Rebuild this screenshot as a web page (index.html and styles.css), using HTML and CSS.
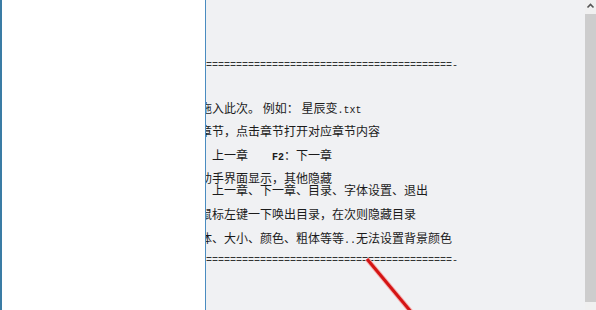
FILE: index.html
```html
<!DOCTYPE html>
<html lang="zh-CN">
<head>
    <meta charset="UTF-8">
    <title>小说阅读器</title>
    <link rel="stylesheet" href="styles.css">
</head>
<body>
<div class="window">
    <!-- 左侧目录 -->
    <aside class="tree"></aside>
    <!-- 正文 -->
    <main class="reader">
        <div class="text">
            <p class="rule">=========================================-</p>
            <p class="blank"></p>
            <p>拖入此次。 例如： 星辰变<span class="en">.txt</span></p>
            <p>章节，点击章节打开对应章节内容</p>
            <p class="pre">　上一章<span class="en">    </span><span class="en b">F2</span>：下一章</p>
            <p class="tight">助手界面显示，其他隐藏</p>
            <p><span class="jp">：</span>上一章、下一章、目录、字体设置、退出</p>
            <p>鼠标左键一下唤出目录，在次则隐藏目录</p>
            <p>体、大小、颜色、粗体等等<span class="en">..</span>无法设置背景颜色</p>
            <p class="rule">=========================================-</p>
        </div>
    </main>
    <!-- 滚动条 -->
    <div class="scrollbar">
        <div class="arrow">
            <svg width="11" height="14" viewBox="0 0 11 14"><polyline points="2.5,7.5 5.5,4.5 8.5,7.5" fill="none" stroke="#555" stroke-width="1.6"/></svg>
        </div>
        <div class="thumb"></div>
        <div class="track"></div>
    </div>
    <!-- 标注 -->
    <svg class="mark" width="596" height="310" viewBox="0 0 596 310">
        <line x1="367" y1="259" x2="412" y2="313" stroke="#f4b0b0" stroke-width="5"/>
        <line x1="367" y1="259" x2="412" y2="313" stroke="#d41414" stroke-width="3"/>
    </svg>
</div>
</body>
</html>
```

FILE: styles.css
```css
*{
    margin: 0;
    padding: 0;
    box-sizing: border-box;
}
html,body{
    width: 100%;
    height: 100%;
    overflow: hidden;
}
body{
    font-family: "Noto Sans CJK SC", "Liberation Sans", sans-serif;
    font-size: 12px;
    color: #1b1b1b;
}
.window{
    position: relative;
    display: flex;
    width: 596px;
    height: 310px;
    background-color: #f0f1f3;
}
.tree{
    width: 206px;
    flex-shrink: 0;
    background-color: #fff;
    border-left: 2px solid #3a7ca5;
    border-right: 1px solid #4a8cc0;
}
.reader{
    flex: 1;
    overflow: hidden;
}
.text{
    margin-left: -6px;
    padding-top: 54px;
    white-space: nowrap;
}
.text p{
    line-height: 23.6px;
    height: 23.6px;
}
.text p.blank{
    height: 18px;
}
.text p.pre{
    white-space: pre;
}
.text p.tight{
    margin-bottom: -11.6px;
}
.text .rule{
    font-family: "Liberation Mono", monospace;
    font-size: 10px;
    color: #333;
    padding-left: 6px;
}
.en{
    font-family: "Liberation Mono", monospace;
    font-size: 10px;
}
.jp{
    font-family: "Noto Sans CJK JP", sans-serif;
}
.b{
    font-weight: bold;
}
.scrollbar{
    width: 11px;
    flex-shrink: 0;
    display: flex;
    flex-direction: column;
    background-color: #f0f0f0;
}
.arrow{
    height: 14px;
    display: flex;
    justify-content: center;
}
.thumb{
    height: 288px;
    background-color: #cdcdcd;
}
.track{
    flex: 1;
}
.mark{
    position: absolute;
    left: 0;
    top: 0;
    pointer-events: none;
}
```
